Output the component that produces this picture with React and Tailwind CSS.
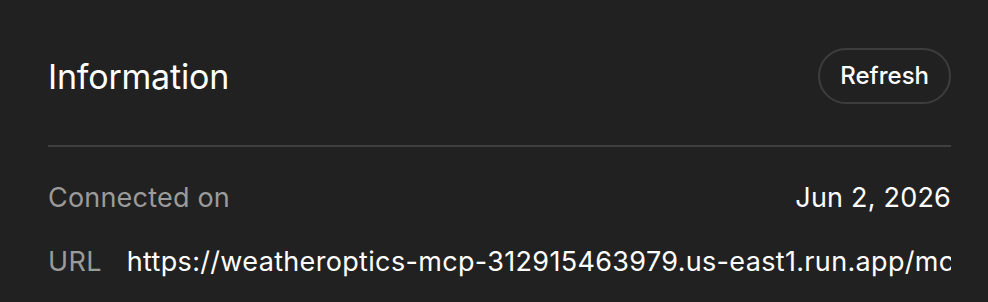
export default function App() {
  return (
    <div
      className="w-[988px] h-[302px] bg-[#212121] text-white overflow-hidden pl-12 pr-[37px] pt-12"
      style={{ fontFamily: 'Inter, "Noto Sans", sans-serif' }}
    >
      <div className="flex items-center justify-between h-[56px]">
        <h2 className="text-[34px] font-normal tracking-[-0.2px]">Information</h2>
        <button className="h-[56px] px-[20px] rounded-full border-2 border-[#3d3d3d] text-[24px] font-medium">
          Refresh
        </button>
      </div>
      <div className="mt-[41px] h-[2px] bg-[#3f3f3f]" />
      <div className="mt-[34px] flex items-center justify-between h-[34px] text-[27px] tracking-[0.2px]">
        <span className="text-[#9b9b9b]">Connected on</span>
        <span>Jun 2, 2026</span>
      </div>
      <div className="mt-[30px] flex items-center h-[34px] text-[27px] gap-[25px] tracking-[0.33px]">
        <span className="text-[#9b9b9b] shrink-0">URL</span>
        <span className="whitespace-nowrap overflow-hidden">
          https://weatheroptics-mcp-312915463979.us-east1.run.app/mcp
        </span>
      </div>
    </div>
  );
}
